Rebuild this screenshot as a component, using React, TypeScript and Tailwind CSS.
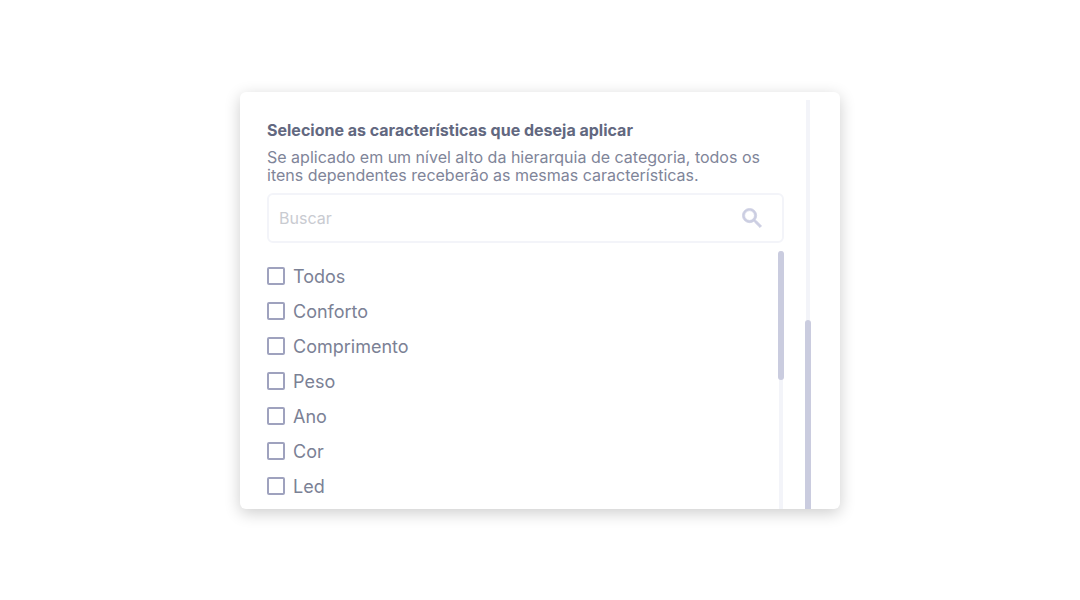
const options = ['Todos', 'Conforto', 'Comprimento', 'Peso', 'Ano', 'Cor', 'Led'];

function Option({ label }: { label: string }) {
  return (
    <li>
      <label className="flex h-[35px] items-center gap-2 text-[18px] text-[#7b8195]">
        <input
          type="checkbox"
          className="size-[18px] shrink-0 appearance-none rounded-xs border-2 border-[#9fa2be] checked:bg-[#9fa2be]"
        />
        {label}
      </label>
    </li>
  );
}

export default function App() {
  return (
    <main className="flex min-h-screen items-center justify-center bg-white p-4 font-['Inter','Liberation_Sans',sans-serif]">
      <section className="flex w-full max-w-[600px] gap-[21px] overflow-hidden rounded-md bg-white pr-[29px] pl-[27px] shadow-[0_4px_16px_rgba(0,0,0,0.2)]">
        <div className="flex min-w-0 flex-1 flex-col pt-7">
          <h1 className="text-[16px] leading-5 font-bold text-[#626880]">
            Selecione as características que deseja aplicar
          </h1>
          <p className="mt-2 text-[16px] leading-[18px] text-[#7f8599]">
            Se aplicado em um nível alto da hierarquia de categoria, todos os
            <br />
            itens dependentes receberão as mesmas características.
          </p>
          <div className="mt-[9px] flex h-[50px] items-center rounded-md border-2 border-[#f3f4f9] pr-5 pl-2.5">
            <input
              type="search"
              aria-label="Buscar"
              placeholder="Buscar"
              className="min-w-0 flex-1 bg-transparent text-[16px] text-[#747a8f] outline-none placeholder:text-[#c9cbd1]"
            />
            <button type="button" aria-label="Pesquisar" className="text-[#cccee2]">
              <svg
                viewBox="2.6 2.6 18.3 18.3"
                className="size-5"
                fill="currentColor"
                stroke="currentColor"
                strokeWidth="0.7"
              >
                <path d="M15.5 14h-.79l-.28-.27A6.47 6.47 0 0 0 16 9.5 6.5 6.5 0 1 0 9.5 16c1.61 0 3.09-.59 4.23-1.57l.27.28v.79l5 4.99L20.49 19l-4.99-5zm-6 0C7.01 14 5 11.99 5 9.5S7.01 5 9.5 5 14 7.01 14 9.5 11.99 14 9.5 14z" />
              </svg>
            </button>
          </div>
          <div className="mt-2 flex justify-between">
            <ul className="pt-2 pb-[5px]">
              {options.map((label) => (
                <Option key={label} label={label} />
              ))}
            </ul>
            <div className="flex w-1.5 justify-center bg-[linear-gradient(#f3f4f9,#f3f4f9)] bg-[length:4px_100%] bg-center bg-no-repeat">
              <div className="h-[129px] w-1.5 rounded-full bg-[#caccdf]" />
            </div>
          </div>
        </div>
        <div className="mt-2 flex w-1.5 flex-col">
          <div className="mx-px h-[220px] bg-[#f3f4f9]" />
          <div className="flex-1 rounded-t-full bg-[#caccdf]" />
        </div>
      </section>
    </main>
  );
}
